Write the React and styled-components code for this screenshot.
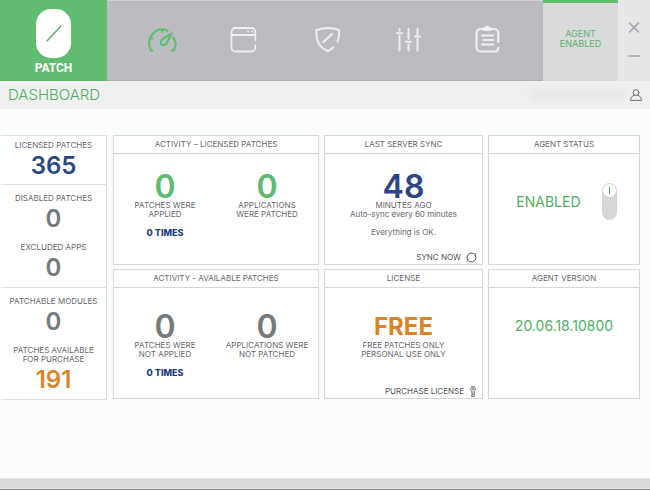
import { useState } from "react";
import styled, { createGlobalStyle } from "styled-components";

const GlobalStyle = createGlobalStyle`
  * {
    box-sizing: border-box;
  }

  body {
    margin: 0;
    background-color: #fafdfc;
    font-family: Inter, "Liberation Sans", sans-serif;
    font-size: 8px;
    line-height: 9px;
    color: #66686b;
  }

  button,
  a {
    font: inherit;
    color: inherit;
    text-decoration: none;
    border: none;
    background: none;
    padding: 0;
    cursor: pointer;
  }
`;

const Window = styled.div`
  display: flex;
  flex-direction: column;
  min-height: 100vh;
  border-bottom: 1px solid #808080;
`;

const TopBar = styled.header`
  display: flex;
  height: 81px;
  background-color: #bbbcc0;
`;

const Brand = styled.a`
  display: flex;
  flex-direction: column;
  align-items: center;
  gap: 4px;
  width: 107px;
  padding-top: 9px;
  background-color: #62bc70;
  color: #ffffff;
  font-family: Roboto, sans-serif;
  font-size: 12px;
  font-weight: bold;
  line-height: 12px;
`;

const Nav = styled.nav`
  flex: 1;
  display: flex;
  padding: 0 15px;
  border-top: 1px solid #d0d1d4;
  border-bottom: 1px solid #b0b1b4;
`;

const NavButton = styled.button`
  flex: 1;
  display: flex;
  align-items: center;
  justify-content: center;
  color: ${(props) => (props.$active ? "#62bc70" : "#eeeff1")};
`;

const AgentTab = styled.div`
  width: 75px;
  padding-top: 26px;
  border-top: 3px solid #62bc70;
  background-color: #d9dadc;
  color: #62b070;
  font-size: 9px;
  line-height: 10px;
  text-align: center;
`;

const WindowButtons = styled.div`
  display: flex;
  flex-direction: column;
  align-items: center;
  gap: 16px;
  width: 32px;
  padding-top: 21px;
  background-color: #e5e6e8;
  color: #a2a3a6;

  button {
    display: flex;
  }
`;

const TitleBar = styled.div`
  display: flex;
  align-items: center;
  justify-content: space-between;
  height: 28px;
  padding: 0 8px;
  background-color: #f0f0f0;
`;

const Title = styled.h1`
  margin: 0;
  color: #4fae62;
  font-size: 15px;
  line-height: 18px;
  font-weight: 300;
`;

const Account = styled.div`
  display: flex;
  align-items: center;
  gap: 4px;
  color: #6a6c6e;
`;

const HiddenName = styled.span`
  width: 96px;
  height: 12px;
  background-color: #e9e9e9;
  filter: blur(3px);
`;

const Content = styled.main`
  flex: 1;
  display: grid;
  grid-template-columns: 106px 1fr;
  align-items: start;
  column-gap: 6px;
  padding: 26px 10px 26px 1px;
`;

const Sidebar = styled.aside`
  border: 1px solid #dde0e0;
  border-left: none;
  background-color: #ffffff;
`;

const StatGroup = styled.section`
  display: flex;
  flex-direction: column;
  gap: 12px;
  padding: ${(props) => (props.$tight ? "5px 0 6px" : "9px 0 7px")};
  text-align: center;

  & + & {
    border-top: 1px solid #dde0e0;
  }
`;

const StatValue = styled.div`
  margin-top: 4px;
  color: ${(props) => props.$color};
  font-size: 24px;
  line-height: 24px;
  font-weight: 600;
`;

const Cards = styled.div`
  display: grid;
  grid-template-columns: 206fr 159fr 152fr;
  gap: 4px 5px;
`;

const CardBox = styled.section`
  display: flex;
  flex-direction: column;
  min-width: 0;
  min-height: 130px;
  border: 1px solid #d5d8d8;
  background-color: #ffffff;
  text-align: center;
`;

const CardTitle = styled.h2`
  margin: 0;
  border-bottom: 1px solid #d5d8d8;
  font-size: 8px;
  line-height: 17px;
  font-weight: 400;
`;

const CardBody = styled.div`
  flex: 1;
  padding-top: ${(props) => (props.$low ? "26px" : "20px")};
`;

const Counters = styled(CardBody)`
  display: grid;
  grid-template-columns: 1fr 1fr;
  white-space: nowrap;
`;

const BigValue = styled.div`
  margin-bottom: 1px;
  color: ${(props) => props.$color};
  font-size: ${(props) => (props.$word ? "24px" : "32px")};
  line-height: 26px;
  font-weight: ${(props) => (props.$word ? 700 : 600)};
`;

const Times = styled.div`
  margin-top: 9px;
  color: #21407c;
  font-size: 9px;
  font-weight: 800;
`;

const Note = styled.p`
  margin: 9px 0 0;
`;

const CardFooter = styled.div`
  display: flex;
  justify-content: flex-end;
  padding: 0 5px 1px;
  color: #505255;
`;

const CardAction = styled.button`
  display: flex;
  align-items: center;
  gap: 5px;
`;

const StatusRow = styled.label`
  display: flex;
  align-items: center;
  justify-content: flex-end;
  gap: 21px;
  margin-top: 9px;
  padding-right: 15%;
`;

const StatusText = styled.span`
  color: #4fae62;
  font-size: 14px;
  line-height: 16px;
  font-weight: 400;
`;

const Version = styled(StatusText)`
  display: block;
  margin-top: 4px;
`;

const Toggle = styled.input.attrs({ type: "checkbox" })`
  appearance: none;
  display: flex;
  align-items: ${(props) => (props.checked ? "flex-start" : "flex-end")};
  width: 15px;
  height: 37px;
  margin: 0;
  padding: 1px;
  border-radius: 8px;
  background-color: #d6d7d8;
  cursor: pointer;

  &::before {
    content: "";
    width: 13px;
    height: 13px;
    border-radius: 50%;
    background: linear-gradient(#4fae62, #4fae62) center / 1px 7px no-repeat #ffffff;
  }
`;

const StatusBar = styled.footer`
  height: 11px;
  border-top: 1px solid #e6e8e8;
  border-bottom: 1px solid #e6e8e8;
  background-color: #d9dadc;
`;

const Icon = ({ size = 32, width = 2, children }) => (
  <svg
    width={size}
    height={size}
    viewBox={`0 0 ${size} ${size}`}
    fill="none"
    stroke="currentColor"
    strokeWidth={width}
    strokeLinecap="round"
    strokeLinejoin="round"
    aria-hidden="true"
  >
    {children}
  </svg>
);

const BrandLogo = () => (
  <svg width="35" height="49" viewBox="0 0 35 49" aria-hidden="true">
    <rect width="35" height="49" rx="15" fill="#ffffff" />
    <path d="M11 32 25 17" stroke="#4fae62" strokeWidth="1.3" strokeLinecap="round" />
  </svg>
);

const GaugeIcon = () => (
  <Icon width={2.2}>
    <path d="M5.500 25.500H3.900C.9 20 1.400 13 6.200 8.200c4.500-4.300 9.800-4.500 14.300-2.500" />
    <path d="M26.200 12.500c2.900 4 2.800 9 .5 13h-2" />
    <path d="M15.200 5v2M3.500 13.500h2" />
    <path d="M24.700 8.500 16.300 13.500c-3.300 2.100-3.200 5.200-1.400 6.200 1.900 1.100 3.900.1 4.800-1.700z" />
  </Icon>
);

const BrowserIcon = () => (
  <Icon width={1.8}>
    <path d="M27.300 15V7a4 4 0 0 0-4-4H7.500a4 4 0 0 0-4 4v15.500a4 4 0 0 0 4 4h15.800a4 4 0 0 0 4-4V20.500" />
    <path d="M3.500 10h23.800M20 6.500h.1M24 6.500h.1" />
  </Icon>
);

const ShieldIcon = () => (
  <Icon width={2}>
    <g transform="translate(3 -1)">
      <path d="M25.500 17.500c1.500-3.500 1.900-7.500 1.700-11.300C19.500 3.300 12 3.300 4.200 6.200 4.200 16.200 6.500 23.200 15.700 27c2.300-.9 4.200-2 5.600-3.600" />
      <path d="M11.500 18 20 10" strokeWidth="2.300" />
    </g>
  </Icon>
);

const SlidersIcon = () => (
  <Icon width={2}>
    <path d="M9.500 4v1.500M9.500 11v14.500M18.500 4v10M18.500 19.500v6M27.500 4v5.500M27.500 14v11.500" />
    <path d="M7 8.300h5M16 16.700h5M25 11.500h5" />
  </Icon>
);

const ClipboardIcon = () => (
  <Icon width={2.2}>
    <path d="M27.300 17V8a4 4 0 0 0-4-4H9.500a4 4 0 0 0-4 4v14.500a4 4 0 0 0 4 4h13.800a4 4 0 0 0 4-3.700" />
    <path d="M11.500 3h2.200c.7-2.600 4.600-2.600 5.300 0h2.200v1c0 1-1 1.500-2 1.500h-5.700c-1 0-2-.5-2-1.500z" fill="currentColor" strokeWidth="1" />
    <path d="M11 10.500h11M12.500 15h9.500M11 19.500h11" strokeWidth="2" />
  </Icon>
);

const UserIcon = () => (
  <Icon size={12} width={1}>
    <circle cx="6" cy="3.500" r="2.900" />
    <path d="M4.300 6.300C2 6.800.6 8.500.6 11.400h10.800C11.400 8.500 10 6.800 7.700 6.300" />
  </Icon>
);

const SyncIcon = () => (
  <Icon size={11} width={1}>
    <path d="M2 8.500A4.600 4.600 0 0 1 7.500 1.400M9 2.500A4.600 4.600 0 0 1 3.500 9.600" />
    <path d="M10.300 1.500 9 2.500l.2 1.500M.7 9.500 2 8.500 1.800 7" strokeWidth="0.800" />
  </Icon>
);

const KeyIcon = () => (
  <svg width="8" height="11" viewBox="0 0 8 11" fill="#d8d9da" stroke="#77797b" aria-hidden="true">
    <path d="M2.800 5.400A2.600 2.600 0 1 1 5.200 5.400V10.500H2.600V9H3.300V7.500H2.800z" />
    <circle cx="4" cy="2.700" r="0.700" />
  </svg>
);

const navItems = [
  { name: "Dashboard", icon: GaugeIcon },
  { name: "Applications", icon: BrowserIcon },
  { name: "Patches", icon: ShieldIcon },
  { name: "Settings", icon: SlidersIcon },
  { name: "Logs", icon: ClipboardIcon },
];

const Stat = ({ label, value, color = "#77797b" }) => (
  <div>
    {label}
    <StatValue $color={color}>{value}</StatValue>
  </div>
);

const Card = ({ title, children }) => (
  <CardBox>
    <CardTitle>{title}</CardTitle>
    {children}
  </CardBox>
);

const App = () => {
  const [active, setActive] = useState("Dashboard");
  const [enabled, setEnabled] = useState(true);
  const status = enabled ? "ENABLED" : "DISABLED";

  return (
    <Window>
      <GlobalStyle />
      <TopBar>
        <Brand href="#">
          <BrandLogo />
          PATCH
        </Brand>
        <Nav>
          {navItems.map(({ name, icon: NavIcon }) => (
            <NavButton
              key={name}
              aria-label={name}
              $active={name === active}
              onClick={() => setActive(name)}
            >
              <NavIcon />
            </NavButton>
          ))}
        </Nav>
        <AgentTab>
          AGENT
          <br />
          {status}
        </AgentTab>
        <WindowButtons>
          <button aria-label="Close">
            <Icon size={12} width={1.6}>
              <path d="M1.500 2 10.500 11M10.500 2 1.500 11" />
            </Icon>
          </button>
          <button aria-label="Minimize">
            <Icon size={12} width={1.6}>
              <path d="M1 7H11" />
            </Icon>
          </button>
        </WindowButtons>
      </TopBar>

      <TitleBar>
        <Title>DASHBOARD</Title>
        <Account>
          <HiddenName />
          <UserIcon />
        </Account>
      </TitleBar>

      <Content>
        <Sidebar>
          <StatGroup $tight>
            <Stat label="LICENSED PATCHES" value="365" color="#2b4682" />
          </StatGroup>
          <StatGroup>
            <Stat label="DISABLED PATCHES" value="0" />
            <Stat label="EXCLUDED APPS" value="0" />
          </StatGroup>
          <StatGroup>
            <Stat label="PATCHABLE MODULES" value="0" />
            <Stat
              label={<>PATCHES AVAILABLE<br />FOR PURCHASE</>}
              value="191"
              color="#db8427"
            />
          </StatGroup>
        </Sidebar>

        <Cards>
          <Card title="ACTIVITY – LICENSED PATCHES">
            <Counters>
              <div>
                <BigValue $color="#5fb971">0</BigValue>
                PATCHES WERE
                <br />
                APPLIED
                <Times>0 TIMES</Times>
              </div>
              <div>
                <BigValue $color="#5fb971">0</BigValue>
                APPLICATIONS
                <br />
                WERE PATCHED
              </div>
            </Counters>
          </Card>

          <Card title="LAST SERVER SYNC">
            <CardBody>
              <BigValue $color="#2b4682">48</BigValue>
              MINUTES AGO
              <br />
              Auto-sync every 60 minutes
              <Note>Everything is OK.</Note>
            </CardBody>
            <CardFooter>
              <CardAction>
                SYNC NOW
                <SyncIcon />
              </CardAction>
            </CardFooter>
          </Card>

          <Card title="AGENT STATUS">
            <CardBody>
              <StatusRow>
                <StatusText>{status}</StatusText>
                <Toggle checked={enabled} onChange={() => setEnabled(!enabled)} />
              </StatusRow>
            </CardBody>
          </Card>

          <Card title="ACTIVITY - AVAILABLE PATCHES">
            <Counters $low>
              <div>
                <BigValue $color="#77797b">0</BigValue>
                PATCHES WERE
                <br />
                NOT APPLIED
                <Times>0 TIMES</Times>
              </div>
              <div>
                <BigValue $color="#77797b">0</BigValue>
                APPLICATIONS WERE
                <br />
                NOT PATCHED
              </div>
            </Counters>
          </Card>

          <Card title="LICENSE">
            <CardBody $low>
              <BigValue $word $color="#db8427">FREE</BigValue>
              FREE PATCHES ONLY
              <br />
              PERSONAL USE ONLY
            </CardBody>
            <CardFooter>
              <CardAction>
                PURCHASE LICENSE
                <KeyIcon />
              </CardAction>
            </CardFooter>
          </Card>

          <Card title="AGENT VERSION">
            <CardBody $low>
              <Version>20.06.18.10800</Version>
            </CardBody>
          </Card>
        </Cards>
      </Content>

      <StatusBar />
    </Window>
  );
};

export default App;
